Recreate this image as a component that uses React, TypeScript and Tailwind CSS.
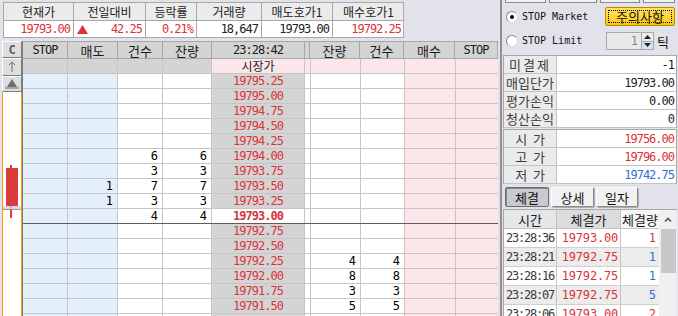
import React from 'react';
import clsx from 'clsx';

const MONO = "font-['DejaVu_Sans_Mono','Noto_Sans_CJK_KR',monospace]";
const KR = "font-['Noto_Sans_CJK_KR',sans-serif]";

type Level = { p: string; s?: string; c?: string; q?: string; bq?: string; bc?: string; cur?: boolean };

const levels: Level[] = [
  { p: '19795.25' },
  { p: '19795.00' },
  { p: '19794.75' },
  { p: '19794.50' },
  { p: '19794.25' },
  { p: '19794.00', c: '6', q: '6' },
  { p: '19793.75', c: '3', q: '3' },
  { p: '19793.50', s: '1', c: '7', q: '7' },
  { p: '19793.25', s: '1', c: '3', q: '3' },
  { p: '19793.00', c: '4', q: '4', cur: true },
  { p: '19792.75' },
  { p: '19792.50' },
  { p: '19792.25', bq: '4', bc: '4' },
  { p: '19792.00', bq: '8', bc: '8' },
  { p: '19791.75', bq: '3', bc: '3' },
  { p: '19791.50', bq: '5', bc: '5' },
  { p: '19791.25' },
];

const trades = [
  { t: '23:28:36', p: '19793.00', q: '1', up: true },
  { t: '23:28:21', p: '19792.75', q: '1', up: false },
  { t: '23:28:16', p: '19792.75', q: '1', up: false },
  { t: '23:28:07', p: '19792.75', q: '5', up: false },
  { t: '23:28:06', p: '19793.00', q: '2', up: true },
];

// column widths of the order book
const W = ['w-[45px]', 'w-[50px]', 'w-[45px]', 'w-[49px]', 'w-[93px]', 'w-[5px]', 'w-[50px]', 'w-[44px]', 'w-[51px]', 'w-[43px]'];

const Cell = ({ w, bg, center, children, className }: { w: string; bg: string; center?: boolean; children?: React.ReactNode; className?: string }) => (
  <div
    className={clsx(
      'h-full shrink-0 border-r border-[#c6c6c6] flex items-center',
      center ? 'justify-center' : 'justify-end pr-[5px]',
      w,
      bg,
      className
    )}
  >
    {children}
  </div>
);

const Radio = ({ checked }: { checked?: boolean }) => (
  <span className="w-[12px] h-[12px] rounded-full bg-white border border-[#8a8a8a] border-b-[#d8d8d8] border-r-[#d8d8d8] flex items-center justify-center shrink-0">
    {checked && <span className="w-[4px] h-[4px] rounded-full bg-black" />}
  </span>
);

const SummaryTable = () => {
  const heads = ['현재가', '전일대비', '등락률', '거래량', '매도호가1', '매수호가1'];
  const ws = ['w-[70px]', 'w-[72px]', 'w-[51px]', 'w-[65px]', 'w-[71px]', 'w-[71px]'];
  return (
    <div className="ml-[3px] mt-[2px] w-[401px] shrink-0 border border-[#a8a8a8] bg-white">
      <div className="flex h-[18px] bg-[#ebebeb] border-b border-[#a8a8a8]">
        {heads.map((h, i) => (
          <div key={h} className={clsx(ws[i], KR, 'shrink-0 text-[12px] leading-none text-[#222] flex items-center justify-center', i < 5 && 'border-r border-[#a8a8a8]')}>
            {h}
          </div>
        ))}
      </div>
      <div className={clsx('flex h-[16px]', MONO, 'text-[12px] tracking-[-1px] leading-none')}>
        <div className={clsx(ws[0], 'shrink-0 border-r border-[#a8a8a8] flex items-center justify-end pr-[3px] text-[#d9343a]')}>19793.00</div>
        <div className={clsx(ws[1], 'shrink-0 border-r border-[#a8a8a8] flex items-center justify-between pl-[3px] pr-[3px] text-[#d9343a]')}>
          <svg width="11" height="9" viewBox="0 0 11 9"><path d="M5.5 0 L11 9 L0 9 Z" fill="#d9343a" /></svg>
          <span>42.25</span>
        </div>
        <div className={clsx(ws[2], 'shrink-0 border-r border-[#a8a8a8] flex items-center justify-end pr-[3px] text-[#d9343a]')}>0.21%</div>
        <div className={clsx(ws[3], 'shrink-0 border-r border-[#a8a8a8] flex items-center justify-end pr-[3px] text-[#222]')}>18,647</div>
        <div className={clsx(ws[4], 'shrink-0 border-r border-[#a8a8a8] flex items-center justify-end pr-[3px] text-[#222]')}>19793.00</div>
        <div className={clsx(ws[5], 'shrink-0 flex items-center justify-end pr-[3px] text-[#d9343a]')}>19792.25</div>
      </div>
    </div>
  );
};

const SideButtons = () => (
  <div className="w-[20px] shrink-0 flex flex-col">
    <div className={clsx('h-[17px] shrink-0 bg-[#dedede] border border-t-white border-l-white border-r-[#7c7c7c] border-b-[#7c7c7c] flex items-center justify-center text-[#5a5a5a] text-[12px] font-bold', MONO)}>C</div>
    <div className="h-[18px] shrink-0 bg-[#dedede] border border-t-white border-l-white border-r-[#7c7c7c] border-b-[#7c7c7c] flex items-center justify-center">
      <svg width="8" height="12" viewBox="0 0 8 12"><path d="M4 1 V11 M1 4 L4 1 L7 4" stroke="#6a6a6a" strokeWidth="1" fill="none" /></svg>
    </div>
    <div className="h-[16px] shrink-0 bg-[#dedede] border border-t-white border-l-white border-r-[#7c7c7c] border-b-[#7c7c7c] flex items-center justify-center">
      <svg width="14" height="10" viewBox="0 0 14 10"><path d="M7 0 L12 8 L2 8 Z" fill="#707070" /><path d="M0 9 H14" stroke="#707070" /></svg>
    </div>
    {/* mini candle chart */}
    <div className="relative flex-1 border-x border-[#ff9a00] bg-white">
      <div className="absolute left-[7px] top-[73px] w-[2px] h-[53px] bg-[#d83c3c]" />
      <div className="absolute left-[3px] top-[76px] w-[12px] h-[38px] bg-[#d83c3c]" />
      <div className="absolute left-0 right-0 top-[114px] h-[3px] bg-[#d4cce8]/80" />
      <div className="absolute left-0 right-0 top-[117px] h-[1px] bg-[#9a9a9a]" />
    </div>
  </div>
);

const OrderBook = () => {
  const head = ['STOP', '매도', '건수', '잔량', '23:28:42', '', '잔량', '건수', '매수', 'STOP'];
  const blue = 'bg-[#e3effb]';
  const pink = 'bg-[#fde6e9]';
  const gray = 'bg-[#d4d4d4]';
  return (
    <div className={clsx('w-[476px] shrink-0 border-l border-[#7a7a7a] flex flex-col overflow-hidden', MONO, 'text-[12px] tracking-[-1px] leading-none')}>
      <div className="flex h-[18px] shrink-0 border-t border-b border-[#a6a6a6] bg-[#d4d4d4]">
        {head.map((h, i) => (
          <div
            key={i}
            className={clsx(
              W[i],
              'shrink-0 h-full border-r border-[#a6a6a6] flex items-center justify-center text-[#1a1a1a]',
              /[가-힣]/.test(h) ? clsx(KR, 'text-[13px] tracking-normal') : 'text-[12px]'
            )}
          >
            {h}
          </div>
        ))}
      </div>
      <div className="flex h-[15px] shrink-0 border-b border-[#c6c6c6]">
        <Cell w={W[0]} bg={gray} />
        <Cell w={W[1]} bg={gray} />
        <Cell w={W[2]} bg={gray} />
        <Cell w={W[3]} bg={gray} />
        <Cell w={W[4]} bg={pink} center className={clsx(KR, 'text-[12px] tracking-normal text-[#1a1a1a]')}>시장가</Cell>
        <Cell w={W[5]} bg={pink} />
        <Cell w={W[6]} bg={pink} />
        <Cell w={W[7]} bg={pink} />
        <Cell w={W[8]} bg={pink} />
        <Cell w={W[9]} bg={pink} />
      </div>
      {levels.map((l) => (
        <div key={l.p} className={clsx('flex h-[15px] shrink-0 border-b', l.cur ? 'border-[#5c5c5c]' : 'border-[#c6c6c6]')}>
          <Cell w={W[0]} bg={blue} />
          <Cell w={W[1]} bg={blue}>{l.s}</Cell>
          <Cell w={W[2]} bg="bg-white">{l.c}</Cell>
          <Cell w={W[3]} bg="bg-white">{l.q}</Cell>
          <Cell w={W[4]} bg={l.cur ? 'bg-white' : gray} center className={clsx('text-[#d9343a]', l.cur && 'font-bold')}>
            {l.p}
          </Cell>
          <Cell w={W[5]} bg="bg-white" />
          <Cell w={W[6]} bg="bg-white">{l.bq}</Cell>
          <Cell w={W[7]} bg="bg-white">{l.bc}</Cell>
          <Cell w={W[8]} bg={pink} />
          <Cell w={W[9]} bg={pink} />
        </div>
      ))}
    </div>
  );
};

const InfoRow = ({ label, value, color = 'text-[#1e1e1e]', spread }: { label: string; value: string; color?: string; spread?: boolean }) => (
  <div className="flex h-[18px] shrink-0 border-b border-[#c4c4c4]">
    <div className={clsx('w-[53px] shrink-0 bg-[#ebebeb] border-r border-[#c4c4c4] flex items-center justify-center text-[13px] leading-none text-[#3c3c3c] whitespace-pre', KR, spread ? 'tracking-[2px]' : 'tracking-normal')}>
      {label}
    </div>
    <div className={clsx('flex-1 bg-white flex items-center justify-end pr-[2px] text-[12px] tracking-[-1px] leading-none', MONO, color)}>{value}</div>
  </div>
);

const RightPanel = () => (
  <div className="ml-[2px] w-[178px] h-[316px] shrink-0 border-l-2 border-[#8e8e94] bg-[#e2e2ea] flex flex-col">
    {/* cut-off toolbar buttons above */}
    <div className="h-[3px] shrink-0 flex gap-[3px] pl-[3px]">
      <div className="w-[41px] bg-[#f2f2f2] border-x border-b border-[#8a8a8a]" />
      <div className="w-[48px] bg-[#f2f2f2] border-x border-b border-[#8a8a8a]" />
      <div className="w-[40px] bg-[#f2f2f2] border-x border-b border-[#8a8a8a]" />
      <div className="w-[32px] bg-[#f2f2f2] border-x border-b border-[#8a8a8a]" />
    </div>

    <div className="mt-[4px] h-[19px] shrink-0 flex items-center pl-[4px]">
      <Radio checked />
      <span className={clsx('ml-[4px] text-[10px] text-[#111] leading-none', MONO)}>STOP Market</span>
      <button className="ml-auto mr-[3px] w-[70px] h-[19px] rounded-[2px] border border-[#b88a00] bg-gradient-to-b from-[#ffe45a] to-[#ffc400] p-[2px]">
        <span className={clsx('w-full h-full flex items-center justify-center border border-dotted border-black text-[13px] leading-none text-[#111]', KR)}>주의사항</span>
      </button>
    </div>

    <div className="mt-[6px] h-[18px] shrink-0 flex items-center pl-[4px]">
      <Radio />
      <span className={clsx('ml-[4px] text-[10px] text-[#111] leading-none', MONO)}>STOP Limit</span>
      <div className="ml-auto flex items-center mr-[9px]">
        <div className="w-[36px] h-[18px] bg-[#e9e9e9] border border-[#a8a8a8] flex items-center justify-end pr-[3px]">
          <span className={clsx('text-[12px] text-[#8a8a8a] leading-none', MONO)}>1</span>
        </div>
        <div className="w-[12px] h-[18px] flex flex-col border border-l-0 border-[#a8a8a8]">
          <div className="flex-1 bg-[#ececec] border-b border-[#a8a8a8] flex items-center justify-center">
            <svg width="7" height="4" viewBox="0 0 7 4"><path d="M3.5 0 L7 4 L0 4 Z" fill="#222" /></svg>
          </div>
          <div className="flex-1 bg-[#cfe6f7] flex items-center justify-center">
            <svg width="7" height="4" viewBox="0 0 7 4"><path d="M0 0 L7 0 L3.5 4 Z" fill="#222" /></svg>
          </div>
        </div>
        <span className={clsx('ml-[3px] text-[13px] leading-none text-[#111]', KR)}>틱</span>
      </div>
    </div>

    <div className="mt-[5px] mx-[1px] shrink-0 border-x border-t border-[#a8a8a8] flex flex-col">
      <InfoRow label="미결제" value="-1" spread />
      <InfoRow label="매입단가" value="19793.00" />
      <InfoRow label="평가손익" value="0.00" />
      <InfoRow label="청산손익" value="0" />
    </div>

    <div className="mt-[1px] mx-[1px] shrink-0 border-x border-t border-[#a8a8a8] flex flex-col">
      <InfoRow label="시  가" value="19756.00" color="text-[#d9343a]" />
      <InfoRow label="고  가" value="19796.00" color="text-[#d9343a]" />
      <InfoRow label="저  가" value="19742.75" color="text-[#2f6fd0]" />
    </div>

    <div className={clsx('mt-[3px] h-[20px] shrink-0 flex gap-[2px] pl-[3px] text-[13px] leading-none text-[#111]', KR)}>
      <div className="w-[44px] rounded-[2px] bg-[#c9c9d0] border border-[#6e6e6e] shadow-[inset_1px_1px_0_#8a8a8a] flex items-center justify-center">체결</div>
      <div className="w-[43px] rounded-[2px] bg-[#f1f1f1] border border-[#8a8a8a] border-t-white border-l-white shadow-[1px_1px_0_#b0b0b0] flex items-center justify-center">상세</div>
      <div className="w-[42px] rounded-[2px] bg-[#f1f1f1] border border-[#8a8a8a] border-t-white border-l-white shadow-[1px_1px_0_#b0b0b0] flex items-center justify-center">일자</div>
    </div>

    <div className="mt-[2px] mx-[1px] flex-1 min-h-0 flex border-l border-t border-[#a8a8a8] overflow-hidden">
      <div className="flex-1 flex flex-col">
        <div className={clsx('flex h-[19px] shrink-0 border-b border-[#c4c4c4] text-[13px] leading-none text-[#1a1a1a]', KR)}>
          <div className="w-[53px] bg-[#e6e6e6] border-r border-[#c4c4c4] flex items-center justify-center">시간</div>
          <div className="w-[64px] bg-[#dcdcdc] border-r border-[#c4c4c4] flex items-center justify-center">체결가</div>
          <div className="flex-1 bg-[#f6f6f6] flex items-center justify-center">체결량</div>
        </div>
        {trades.map((t, i) => (
          <div key={t.t} className={clsx('flex h-[19px] shrink-0 border-b border-[#d0d0d0] text-[12px] leading-none', MONO, i % 2 ? 'bg-[#ececec]' : 'bg-white')}>
            <div className="w-[53px] border-r border-[#c4c4c4] flex items-center justify-center text-[#3a3a3a] tracking-[-1.2px]">{t.t}</div>
            <div className="w-[64px] border-r border-[#c4c4c4] flex items-center justify-end pr-[2px] text-[#d9343a] tracking-[-0.2px]">{t.p}</div>
            <div className={clsx('flex-1 flex items-center justify-end pr-[3px]', t.up ? 'text-[#d9343a]' : 'text-[#2f6fd0]')}>{t.q}</div>
          </div>
        ))}
      </div>
      <div className="w-[18px] shrink-0 bg-[#f0f0f0] flex flex-col items-center">
        <div className="h-[19px] shrink-0 flex items-center justify-center">
          <svg width="8" height="5" viewBox="0 0 8 5"><path d="M1 4.5 L4 1.5 L7 4.5" stroke="#555" strokeWidth="1.6" fill="none" /></svg>
        </div>
        <div className="w-[15px] h-[44px] shrink-0 bg-[#c8c8c8]" />
      </div>
    </div>
  </div>
);

export default function App() {
  return (
    <div className="w-[678px] h-[316px] overflow-hidden bg-[#e2e2ea] flex">
      <div className="w-[498px] shrink-0 flex flex-col">
        <SummaryTable />
        <div className="mt-[3px] flex flex-1 min-h-0 pl-[2px]">
          <SideButtons />
          <OrderBook />
        </div>
      </div>
      <RightPanel />
    </div>
  );
}
